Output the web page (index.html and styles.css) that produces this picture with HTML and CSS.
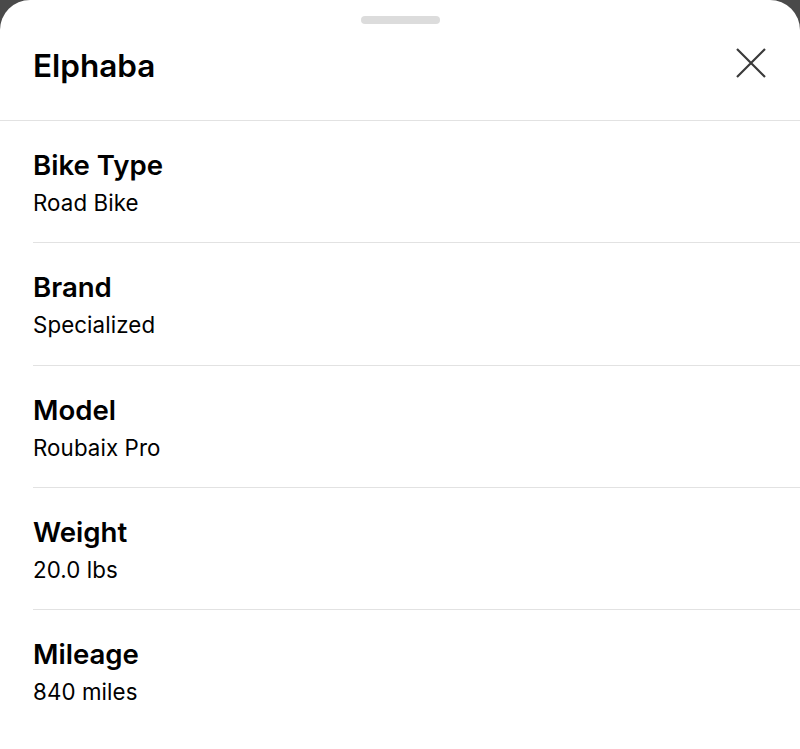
FILE: index.html
```html
<!DOCTYPE html>
<html lang="en">
<head>
<meta charset="utf-8">
<title>Elphaba</title>
<link rel="stylesheet" href="styles.css">
</head>
<body>
<div class="sheet">
  <header class="sheet-header">
    <div class="handle"></div>
    <div class="title-row">
      <h1 class="title">Elphaba</h1>
      <button class="close" aria-label="Close">
        <svg width="30" height="30" viewBox="0 0 30 30"><path d="M1 1 L29 29 M29 1 L1 29" stroke="#3a3a3a" stroke-width="2.2" fill="none"/></svg>
      </button>
    </div>
  </header>
  <ul class="details">
    <li class="row"><div class="label">Bike Type</div><div class="value">Road Bike</div></li>
    <li class="row"><div class="label">Brand</div><div class="value">Specialized</div></li>
    <li class="row"><div class="label">Model</div><div class="value">Roubaix Pro</div></li>
    <li class="row"><div class="label">Weight</div><div class="value">20.0 lbs</div></li>
    <li class="row"><div class="label">Mileage</div><div class="value">840 miles</div></li>
  </ul>
</div>
</body>
</html>
```
FILE: styles.css
```css
html, body {
  margin: 0;
  padding: 0;
  background: #4a4a4a;
}
body {
  font-family: Inter, "Noto Sans", sans-serif;
  color: #000;
}
.sheet {
  background: #fff;
  border-radius: 30px 30px 0 0;
  min-height: 749px;
  overflow: hidden;
}
.sheet-header {
  display: flex;
  flex-direction: column;
  border-bottom: 1px solid #e2e2e2;
}
.handle {
  align-self: center;
  width: 79px;
  height: 8px;
  border-radius: 4px;
  background: #dcdcdc;
  margin-top: 16px;
}
.title-row {
  display: flex;
  justify-content: space-between;
  align-items: flex-start;
  padding: 24px 34px 36px 33px;
}
.title {
  margin: 0;
  font-size: 31.5px;
  line-height: 36px;
  font-weight: 600;
}
.close {
  border: 0;
  background: none;
  padding: 0;
  width: 30px;
  height: 30px;
  display: flex;
}
.details {
  list-style: none;
  margin: 0;
  padding: 0 0 0 33px;
}
.row {
  padding: 28px 0 25.3px;
  border-bottom: 1px solid #e2e2e2;
}
.row:last-child {
  border-bottom: 0;
}
.label {
  font-size: 27.6px;
  line-height: 32px;
  font-weight: 600;
}
.value {
  margin-top: 8px;
  font-size: 22.3px;
  line-height: 28px;
  font-weight: 400;
  letter-spacing: 0.1px;
}
```
